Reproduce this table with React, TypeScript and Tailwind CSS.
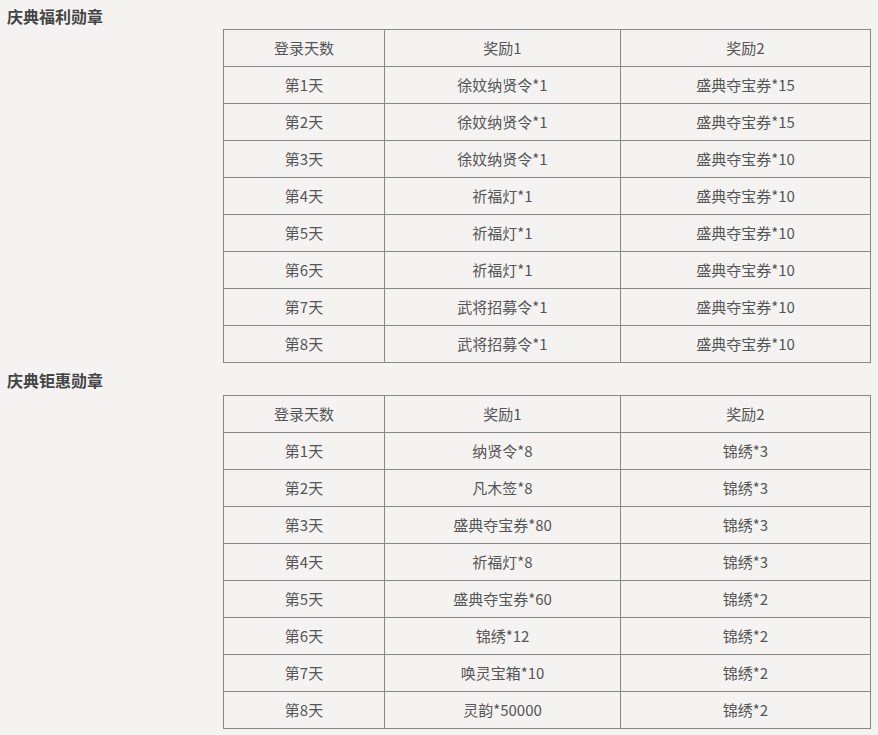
const font = '"Microsoft YaHei", "Noto Sans CJK SC", "Noto Sans", sans-serif';

type Row = [string, string, string];

const table1: Row[] = [
  ['第1天', '徐妏纳贤令*1', '盛典夺宝券*15'],
  ['第2天', '徐妏纳贤令*1', '盛典夺宝券*15'],
  ['第3天', '徐妏纳贤令*1', '盛典夺宝券*10'],
  ['第4天', '祈福灯*1', '盛典夺宝券*10'],
  ['第5天', '祈福灯*1', '盛典夺宝券*10'],
  ['第6天', '祈福灯*1', '盛典夺宝券*10'],
  ['第7天', '武将招募令*1', '盛典夺宝券*10'],
  ['第8天', '武将招募令*1', '盛典夺宝券*10'],
];

const table2: Row[] = [
  ['第1天', '纳贤令*8', '锦绣*3'],
  ['第2天', '凡木签*8', '锦绣*3'],
  ['第3天', '盛典夺宝券*80', '锦绣*3'],
  ['第4天', '祈福灯*8', '锦绣*3'],
  ['第5天', '盛典夺宝券*60', '锦绣*2'],
  ['第6天', '锦绣*12', '锦绣*2'],
  ['第7天', '唤灵宝箱*10', '锦绣*2'],
  ['第8天', '灵韵*50000', '锦绣*2'],
];

function RewardTable({ rows }: { rows: Row[] }) {
  const all: Row[] = [['登录天数', '奖励1', '奖励2'], ...rows];
  return (
    <table className="ml-[223px] w-[647px] border-collapse table-fixed text-[15px] text-[#555]">
      <colgroup>
        <col className="w-[161px]" />
        <col className="w-[236px]" />
        <col className="w-[250px]" />
      </colgroup>
      <tbody>
        {all.map((r, i) => (
          <tr key={i} className="h-[37px]">
            {r.map((c, j) => (
              <td key={j} className="border border-[#888] text-center p-0 leading-[36px]">
                {c}
              </td>
            ))}
          </tr>
        ))}
      </tbody>
    </table>
  );
}

export default function App() {
  return (
    <div className="min-h-[735px] w-[878px] bg-[#f4f3f2]" style={{ fontFamily: font }}>
      <h2 className="h-[29px] pl-[7px] pt-[3px] text-[16px] font-bold leading-[26px] text-[#444]">
        庆典福利勋章
      </h2>
      <RewardTable rows={table1} />
      <h2 className="h-[32px] pl-[7px] pt-[4px] text-[16px] font-bold leading-[26px] text-[#444]">
        庆典钜惠勋章
      </h2>
      <RewardTable rows={table2} />
    </div>
  );
}
